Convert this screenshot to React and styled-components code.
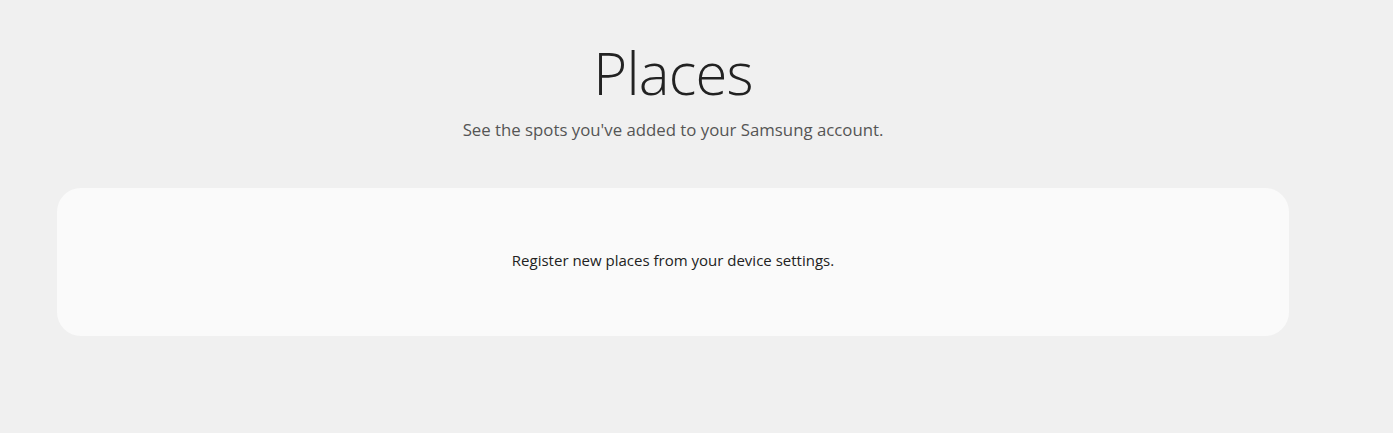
import React from 'react';
import styled, {createGlobalStyle} from 'styled-components';

const GlobalStyle = createGlobalStyle`
  html, body {
    margin: 0;
    padding: 0;
    background: #f0f0f0;
  }
  body {
    font-family: "Open Sans", "Noto Sans", sans-serif;
    color: #222;
  }
`;

const Page = styled.main`
  min-height: 433px;
  padding: 0 104px 0 57px;
  display: flex;
  flex-direction: column;
  align-items: center;
`;

const Title = styled.h1`
  margin: 38px 0 0;
  font-size: 58px;
  font-weight: 300;
  line-height: 70px;
  letter-spacing: -0.8px;
  color: #222;
`;

const Subtitle = styled.p`
  margin: 10px 0 0;
  font-size: 16.8px;
  line-height: 24px;
  color: #555;
`;

const Card = styled.section`
  box-sizing: border-box;
  width: 100%;
  height: 148px;
  margin-top: 46px;
  border-radius: 24px;
  background: #fafafa;
  display: flex;
  align-items: center;
  justify-content: center;
  padding-bottom: 4px;
`;

const Message = styled.p`
  margin: 0;
  font-size: 15px;
  color: #222;
`;

export default function App() {
    return (
        <>
            <GlobalStyle/>
            <Page>
                <Title>Places</Title>
                <Subtitle>See the spots you've added to your Samsung account.</Subtitle>
                <Card>
                    <Message>Register new places from your device settings.</Message>
                </Card>
            </Page>
        </>
    );
}
